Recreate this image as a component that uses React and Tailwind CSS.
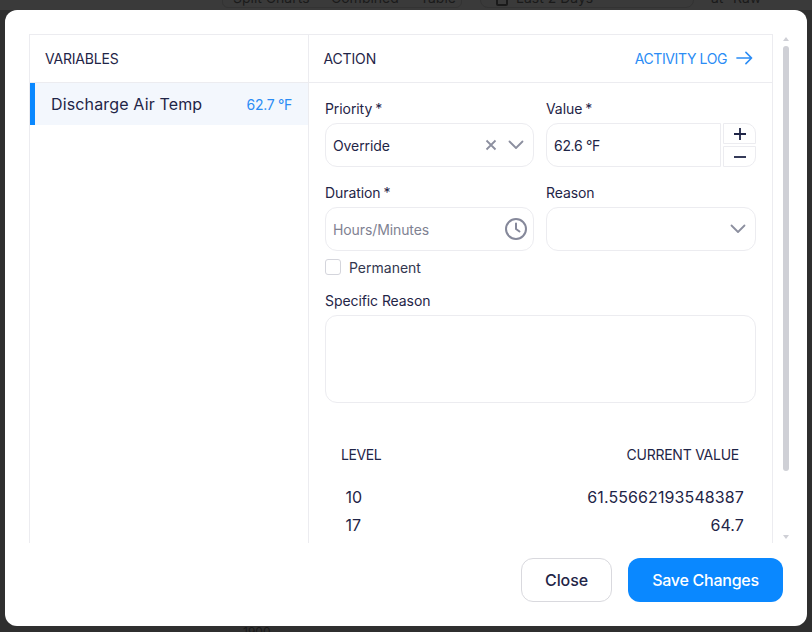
import React from "react";

function Chevron({ className }) {
  return (
    <svg viewBox="0 0 16 10" className={className} fill="none" stroke="currentColor" strokeWidth="1.8" strokeLinecap="round" strokeLinejoin="round">
      <path d="M1.5 1.5 8 8l6.5-6.5" />
    </svg>
  );
}

function Label({ children, star }) {
  return (
    <div className="h-[20px] text-[14px] leading-[20px] text-[#1f2547] mb-[4px] tracking-[-0.08px]">
      {children}
      {star && <span className="ml-[3px]">*</span>}
    </div>
  );
}

export default function App() {
  return (
    <div className="relative w-[812px] h-[632px] overflow-hidden bg-[#2f2f2f] font-['Inter','Liberation_Sans',sans-serif] text-[#1f2547]">
      <div className="absolute left-0 right-0 top-0 h-[10px] bg-[#3a3a3a] overflow-hidden text-[14px] text-[#1a1a1a] leading-[14px]">
        <div className="absolute left-[222px] top-[-12px] w-[240px] h-[20px] border border-[#333333] rounded-[6px]" />
        <div className="absolute left-[480px] top-[-12px] w-[214px] h-[20px] border border-[#333333] rounded-[8px]" />
        <span className="absolute left-[233px] top-[-9px]">Split Charts</span>
        <span className="absolute left-[331px] top-[-9px]">Combined</span>
        <span className="absolute left-[420px] top-[-9px]">Table</span>
        <div className="absolute left-[496px] top-[-6px] w-[12px] h-[12px] border-2 border-[#1a1a1a] rounded-[2px]" />
        <span className="absolute left-[516px] top-[-9px]">Last 2 Days</span>
        <span className="absolute left-[711px] top-[-9px]">at</span>
        <span className="absolute left-[733px] top-[-9px]">Raw</span>
      </div>
      <div className="absolute left-[243px] top-[626px] text-[12px] leading-[12px] text-[#1a1a1a]">1900</div>

      <div className="absolute left-[5px] top-[10px] w-[802px] h-[616px] bg-white rounded-[12px] flex flex-col">
        <div className="relative h-[533px] pl-[24px] pt-[24px] pr-[34px]">
          <div className="h-[509px] border-l border-t border-r border-[#ececf0] flex overflow-hidden">
            <div className="w-[279px] border-r border-[#ececf0] shrink-0">
              <div className="h-[48px] pb-[1px] border-b border-[#ececf0] flex items-center pl-[15px] text-[14px] tracking-[-0.2px]">VARIABLES</div>
              <div className="h-[42px] bg-[#f3f7fd] border-l-[5px] border-[#0a88ff] flex items-center justify-between pl-[16px] pr-[16px]">
                <span className="text-[16px] tracking-[0.15px]">Discharge Air Temp</span>
                <span className="text-[14px] text-[#2a8cf5] tracking-[-0.3px]">62.7 °F</span>
              </div>
            </div>
            <div className="flex-1 min-w-0">
              <div className="h-[48px] pb-[1px] border-b border-[#ececf0] flex items-center justify-between pl-[14.5px] pr-[19px] text-[14px]">
                <span className="tracking-[-0.15px]">ACTION</span>
                <span className="flex items-center gap-[9px] text-[#2a8cf5] tracking-[-0.4px]">
                  ACTIVITY LOG
                  <svg viewBox="0 0 18 14" className="w-[17px] h-[14px]" fill="none" stroke="currentColor" strokeWidth="1.7" strokeLinecap="round" strokeLinejoin="round">
                    <path d="M1 7h15.5M10.5 1l6 6-6 6" />
                  </svg>
                </span>
              </div>
              <div className="pl-[16px] pr-[16px] pt-[16px]">
                <div className="grid grid-cols-[209px_210px] gap-x-[12px]">
                  <div>
                    <Label star>Priority</Label>
                    <div className="h-[44px] border border-[#ececf0] rounded-[12px] flex items-center pl-[7px] pr-[9px] text-[14px] tracking-[-0.1px]">
                      <span className="flex-1">Override</span>
                      <svg viewBox="0 0 12 12" className="w-[12px] h-[12px] text-[#8c8f9f] mr-[11px]" fill="none" stroke="currentColor" strokeWidth="1.8">
                        <path d="M1.5 1.5l9 9M10.5 1.5l-9 9" />
                      </svg>
                      <Chevron className="w-[16px] h-[10px] text-[#8c8f9f]" />
                    </div>
                  </div>
                  <div>
                    <Label star>Value</Label>
                    <div className="flex h-[44px] gap-[2px]">
                      <div className="w-[175px] border border-[#ececf0] rounded-l-[12px] flex items-center pl-[7px] text-[14px] tracking-[-0.3px]">62.6 °F</div>
                      <div className="flex-1 flex flex-col gap-[2px]">
                        <div className="h-[21px] border border-[#ececf0] rounded-tr-[10px] flex items-center justify-center">
                          <svg viewBox="0 0 12 12" className="w-[12px] h-[12px]" fill="none" stroke="#1f2547" strokeWidth="1.8"><path d="M6 0v12M0 6h12" /></svg>
                        </div>
                        <div className="h-[21px] border border-[#ececf0] rounded-br-[10px] flex items-center justify-center">
                          <svg viewBox="0 0 12 12" className="w-[12px] h-[12px]" fill="none" stroke="#1f2547" strokeWidth="1.8"><path d="M0 6h12" /></svg>
                        </div>
                      </div>
                    </div>
                  </div>
                </div>

                <div className="grid grid-cols-[209px_210px] gap-x-[12px] mt-[16px]">
                  <div>
                    <Label star>Duration</Label>
                    <div className="h-[44px] border border-[#ececf0] rounded-[12px] flex items-center pl-[7px] pr-[5px] text-[14px] text-[#7f8292] tracking-[-0.1px]">
                      <span className="flex-1">Hours/Minutes</span>
                      <svg viewBox="0 0 24 24" className="w-[24px] h-[24px] text-[#85889a]" fill="none" stroke="currentColor" strokeWidth="2" strokeLinecap="round" strokeLinejoin="round">
                        <circle cx="12" cy="12" r="10" />
                        <path d="M12 6.5V12l3.5 2.5" />
                      </svg>
                    </div>
                  </div>
                  <div>
                    <Label>Reason</Label>
                    <div className="h-[44px] border border-[#ececf0] rounded-[12px] flex items-center justify-end pr-[9px]">
                      <Chevron className="w-[16px] h-[10px] text-[#8c8f9f]" />
                    </div>
                  </div>
                </div>

                <div className="flex items-center h-[20px] mt-[6px]">
                  <div className="w-[16px] h-[16px] border border-[#d4d5dc] rounded-[3px]" />
                  <span className="ml-[8px] text-[14px] text-[#33374f]">Permanent</span>
                </div>

                <div className="mt-[14px]">
                  <Label>Specific Reason</Label>
                  <div className="h-[88px] border border-[#ececf0] rounded-[12px]" />
                </div>

                <div className="mt-[42px] pl-[16px] pr-[17px] flex justify-between text-[14px] leading-[20px]">
                  <span className="tracking-[-0.4px]">LEVEL</span>
                  <span className="tracking-[-0.25px]">CURRENT VALUE</span>
                </div>
                <div className="mt-[18px] pl-[20.5px] pr-[12px] flex justify-between text-[16px] leading-[28px] tracking-[0.1px]">
                  <span>10</span>
                  <span>61.55662193548387</span>
                </div>
                <div className="pl-[20.5px] pr-[12px] flex justify-between text-[16px] leading-[28px] tracking-[0.1px]">
                  <span>17</span>
                  <span>64.7</span>
                </div>
              </div>
            </div>
          </div>

          <div className="absolute left-[778px] top-[27px] w-0 h-0 border-x-[3px] border-x-transparent border-b-[4px] border-b-[#cfd0d6]" />
          <div className="absolute left-[778px] top-[36px] w-[6px] h-[425px] rounded-full bg-[#cfd0d6]" />
          <div className="absolute left-[778px] top-[525px] w-0 h-0 border-x-[3px] border-x-transparent border-t-[4px] border-t-[#cfd0d6]" />
        </div>

        <div className="flex justify-end gap-[16px] pr-[24px] pt-[15px]">
          <button className="w-[91px] h-[44px] border border-[#d9d9de] rounded-[12px] text-[16px] font-[450] text-[#1f2547] tracking-[-0.1px]">Close</button>
          <button className="w-[155px] h-[44px] bg-[#0a88ff] rounded-[12px] text-[16px] font-[450] text-white tracking-[-0.25px]">Save Changes</button>
        </div>
      </div>
    </div>
  );
}
